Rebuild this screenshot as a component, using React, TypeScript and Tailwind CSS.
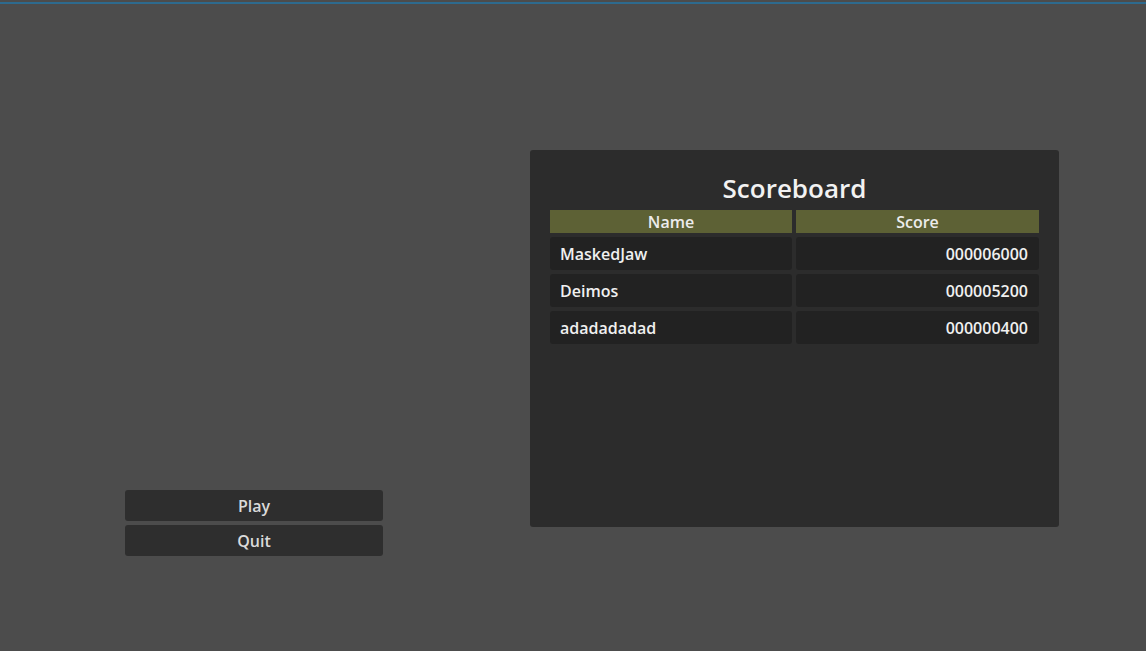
import React from "react";

const rows = [
  { name: "MaskedJaw", score: "000006000" },
  { name: "Deimos", score: "000005200" },
  { name: "adadadadad", score: "000000400" },
];

export default function App() {
  return (
    <div
      className="w-[1146px] h-[651px] bg-[#4c4c4c] overflow-hidden pt-[2px] font-semibold"
      style={{ fontFamily: '"Open Sans", "Noto Sans", sans-serif' }}
    >
      <div className="h-[2px] bg-[#2d6a8e]" />
      <div className="flex items-start">
        <div className="ml-[125px] mt-[486px] w-[258px] flex flex-col gap-[4px]">
          <button className="h-[31px] rounded-[3px] bg-[#2e2e2e] text-[#dadada] text-[16px] leading-[32px] font-semibold">
            Play
          </button>
          <button className="h-[31px] rounded-[3px] bg-[#2e2e2e] text-[#dadada] text-[16px] leading-[32px] font-semibold">
            Quit
          </button>
        </div>
        <div className="ml-[147px] mt-[146px] w-[529px] h-[377px] rounded-[3px] bg-[#2c2c2c] px-[20px] pt-[20px]">
          <div className="h-[36px] leading-[36px] text-center text-[26px] text-[#f2f2f2]">
            Scoreboard
          </div>
          <div className="mt-[4px] grid grid-cols-[242px_243px] gap-x-[4px]">
            <div className="h-[23px] leading-[25px] bg-[#5d6135] text-center text-[16px] text-[#ececec]">
              Name
            </div>
            <div className="h-[23px] leading-[25px] bg-[#5d6135] text-center text-[16px] text-[#ececec]">
              Score
            </div>
          </div>
          <div className="mt-[4px] flex flex-col gap-[4px]">
            {rows.map((r) => (
              <div key={r.name} className="grid grid-cols-[242px_243px] gap-x-[4px]">
                <div className="h-[33px] leading-[34px] rounded-[3px] bg-[#222222] pl-[10px] text-[16px] text-[#f0f0f0]">
                  {r.name}
                </div>
                <div className="h-[33px] leading-[34px] rounded-[3px] bg-[#222222] pr-[11px] text-right text-[16px] text-[#f0f0f0]">
                  {r.score}
                </div>
              </div>
            ))}
          </div>
        </div>
      </div>
    </div>
  );
}
